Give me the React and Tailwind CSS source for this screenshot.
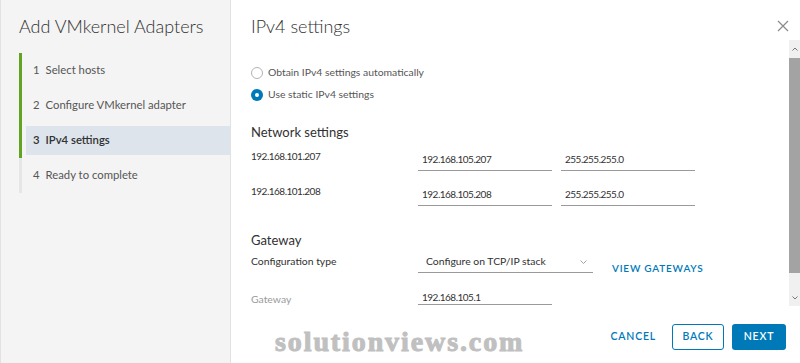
import React from "react";

const steps = [
  { n: 1, label: "Select hosts", done: true },
  { n: 2, label: "Configure VMkernel adapter", done: true },
  { n: 3, label: "IPv4 settings", done: true, active: true },
  { n: 4, label: "Ready to complete", done: false },
];

const rows = [
  { host: "192.168.101.207", ip: "192.168.105.207", mask: "255.255.255.0" },
  { host: "192.168.101.208", ip: "192.168.105.208", mask: "255.255.255.0" },
];

const Radio = ({ checked, label }) => (
  <label className="flex items-center h-[22px] gap-[5px] text-[10.4px] text-[#565656]">
    {checked ? (
      <span className="w-[12px] h-[12px] rounded-full bg-[#0079b8] flex items-center justify-center">
        <span className="w-[4px] h-[4px] rounded-full bg-white" />
      </span>
    ) : (
      <span className="w-[12px] h-[12px] rounded-full border border-[#b3b3b3] bg-white" />
    )}
    <span>{label}</span>
  </label>
);

const Field = ({ value, w, h = "h-[22px]" }) => (
  <div
    className={`${w} ${h} flex items-center border-b border-[#9a9a9a] pl-[4px] text-[10px] tracking-[-0.5px] text-[#313131]`}
  >
    {value}
  </div>
);

export default function App() {
  return (
    <div className="w-[800px] h-[363px] flex bg-white overflow-hidden font-['Lato','Noto_Sans',sans-serif]">
      {/* wizard steps */}
      <aside className="w-[231px] h-full bg-[#f4f4f4] border-l border-r border-[#e2e2e2] flex flex-col pl-[18px]">
        <h1 className="h-[53px] pt-[14px] text-[18px] font-light text-[#313131] leading-[24px]">
          Add VMkernel Adapters
        </h1>
        <div className="flex flex-col">
          {steps.map((s) => (
            <div key={s.n} className="flex h-[35px]">
              <div className={`w-[3px] h-full ${s.done ? "bg-[#62a420]" : "bg-[#e6e6e6]"}`} />
              <div
                className={`ml-[4px] flex-1 flex items-center pl-[7px] text-[11.3px] ${
                  s.active ? "bg-[#dde4ec] text-[#313131] font-semibold my-[3px]" : "text-[#565656]"
                }`}
              >
                <span className="mr-[6px]">{s.n}</span>
                {s.label}
              </div>
            </div>
          ))}
        </div>
      </aside>

      {/* main panel */}
      <main className="flex-1 flex flex-col">
        <header className="h-[40px] flex items-start justify-between pl-[20px] pr-[11px]">
          <h2 className="pt-[14px] text-[18px] font-light text-[#313131] leading-[24px]">IPv4 settings</h2>
          <svg width="12" height="12" viewBox="0 0 12 12" className="mt-[20px]">
            <path d="M1 1 L11 11 M11 1 L1 11" stroke="#8a8a8a" strokeWidth="1.2" />
          </svg>
        </header>

        <div className="h-[266px] flex">
          <div className="flex-1 overflow-hidden pl-[20px] pt-[22px]">
            <Radio label="Obtain IPv4 settings automatically" />
            <Radio checked label="Use static IPv4 settings" />

            <h3 className="mt-[16px] h-[20px] leading-[20px] text-[13px] text-[#313131]">Network settings</h3>
            {rows.map((r, i) => (
              <div key={r.host} className={`flex ${i === 0 ? "mt-[6px]" : "mt-[12px]"}`}>
                <div className="w-[167px] leading-[16px] text-[10px] tracking-[-0.5px] text-[#313131]">{r.host}</div>
                <div className="flex gap-[9px] mt-[1px]">
                  <Field value={r.ip} w="w-[134px]" />
                  <Field value={r.mask} w="w-[134px]" />
                </div>
              </div>
            ))}

            <h3 className="mt-[24px] h-[20px] leading-[20px] text-[13px] text-[#313131]">Gateway</h3>
            <div className="mt-[2px] flex items-start">
              <div className="w-[167px] h-[20px] flex items-center text-[10.4px] text-[#313131]">Configuration type</div>
              <div className="w-[175px] h-[21px] flex items-center justify-between border-b border-[#9a9a9a] pl-[8px] pr-[6px] text-[10.4px] text-[#313131]">
                Configure on TCP/IP stack
                <svg width="7" height="4" viewBox="0 0 7 4">
                  <path d="M0.5 0.5 L3.5 3.5 L6.5 0.5" fill="none" stroke="#9a9a9a" strokeWidth="0.9" />
                </svg>
              </div>
              <button className="ml-[19px] mt-[9px] text-[10px] font-semibold tracking-[0.8px] text-[#0079b8]">
                VIEW GATEWAYS
              </button>
            </div>
            <div className="mt-[14px] flex items-start">
              <div className="w-[167px] h-[20px] flex items-center text-[10.4px] text-[#9a9a9a]">Gateway</div>
              <Field value="192.168.105.1" w="w-[134px]" h="h-[15px]" />
            </div>
          </div>

          {/* scrollbar */}
          <div className="w-[11px] h-full flex flex-col bg-[#f0f0f0]">
            <div className="h-[18px] flex items-center justify-center">
              <svg width="6" height="4" viewBox="0 0 6 4">
                <path d="M0.5 3.5 L3 1 L5.5 3.5" fill="none" stroke="#777" strokeWidth="1" />
              </svg>
            </div>
            <div className="h-[215px] bg-[#a3a3a3]" />
            <div className="flex-1 flex items-end justify-center pb-[6px]">
              <svg width="6" height="4" viewBox="0 0 6 4">
                <path d="M0.5 0.5 L3 3 L5.5 0.5" fill="none" stroke="#777" strokeWidth="1" />
              </svg>
            </div>
          </div>
        </div>

        <footer className="flex-1 flex items-start pt-[18px] pr-[14px]">
          <div className="ml-[44px] mt-[3px] text-[28px] font-bold leading-[30px] text-[#c0c0c0] tracking-[1.9px] font-['Liberation_Serif',serif] [-webkit-text-stroke:1px_#c0c0c0]">
            solutionviews.com
          </div>
          <div className="ml-auto flex items-center gap-[8px]">
            <button className="h-[26px] px-[8px] text-[10.5px] font-semibold tracking-[0.8px] text-[#0079b8]">CANCEL</button>
            <button className="w-[52px] h-[26px] border border-[#0079b8] rounded-[3px] text-[10.5px] font-semibold tracking-[0.8px] text-[#0079b8]">
              BACK
            </button>
            <button className="w-[54px] h-[26px] bg-[#0079b8] rounded-[3px] text-[10.5px] font-semibold tracking-[0.8px] text-white">
              NEXT
            </button>
          </div>
        </footer>
      </main>
    </div>
  );
}
